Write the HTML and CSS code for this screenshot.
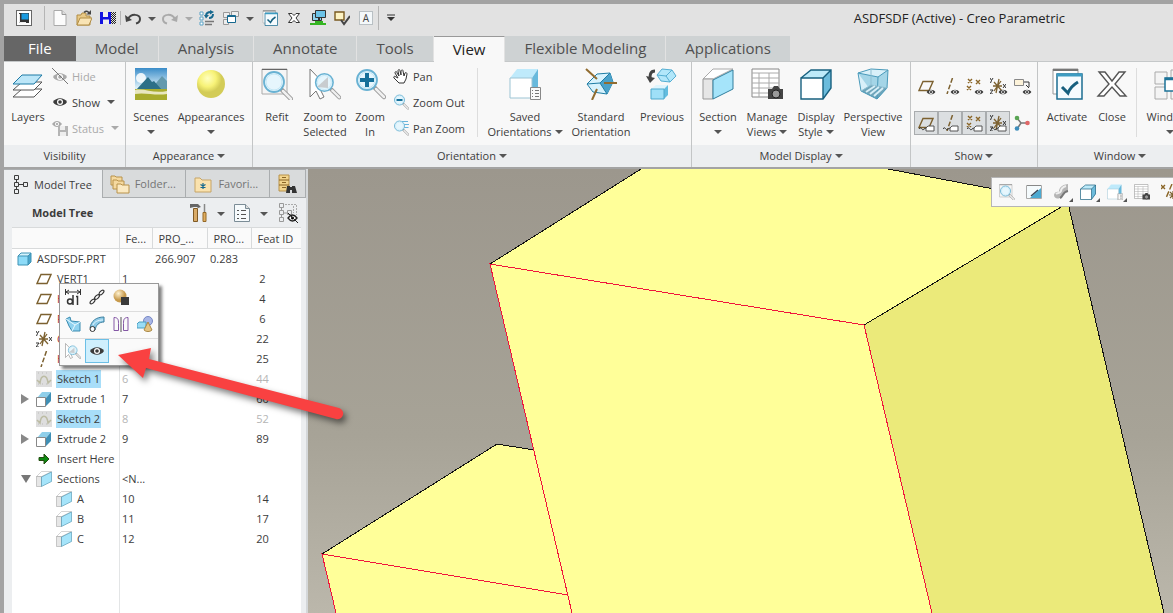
FILE: index.html
```html
<!DOCTYPE html>
<html lang="en">
<head>
  <meta charset="UTF-8">
  <meta name="viewport" content="width=device-width, initial-scale=1.0">
  <title>ASDFSDF (Active) - Creo Parametric</title>
  <link rel="stylesheet" href="styles.css">
</head>
<body>

  <!-- icon set -->
  <svg class="sprite" aria-hidden="true">
    <symbol id="i-app" viewBox="0 0 16 16"><rect x=".5" y=".5" width="15" height="15" fill="#fff" stroke="#666"/><rect x="3" y="3" width="10" height="10" fill="#333"/><rect x="5.500" y="3.500" width="7" height="6" fill="#1a9be0"/><path d="M3.500 4v8.500H10" fill="none" stroke="#eee"/></symbol>
    <symbol id="i-new" viewBox="0 0 16 16"><path d="M2 .5h8l4 4v11H2z" fill="#fcfcfc" stroke="#aaa"/><path d="M10 .5v4h4" fill="#ddd" stroke="#999"/></symbol>
    <symbol id="i-open" viewBox="0 0 16 16"><path d="M1 15V5h4l1-2h4v3h4v9z" fill="#e8c987" stroke="#b18d45"/><path d="M1 15l3-7h12l-3 7z" fill="#f9e4b4" stroke="#b18d45"/><path d="M8 2.500c2-2 4-1.500 5 .5" fill="none" stroke="#444" stroke-width="1.500"/><path d="M15 0v4.500h-4.500z" fill="#444"/></symbol>
    <symbol id="i-save" viewBox="0 0 16 16"><path d="M0 2h11v12H0z" fill="#1111e0"/><path d="M3 2h5v5H3zM3 9.500h6V14H3z" fill="#eee"/><path d="M11.500 2v12M13.500 2v12M15.500 2v12" stroke="#222" stroke-dasharray="1 1"/><path d="M12.500 3v11M14.500 3v11" stroke="#222" stroke-dasharray="1 1"/></symbol>
    <symbol id="i-undo" viewBox="0 0 16 16"><path d="M3 9c3-6 12-5 12 0 0 3-2 4-4 4.500" fill="none" stroke="currentColor" stroke-width="2"/><path d="M0 5l1 7 6-2z" fill="currentColor"/></symbol>
    <symbol id="i-redo" viewBox="0 0 16 16"><path d="M13 9C10 3 1 4 1 9c0 3 2 4 4 4.500" fill="none" stroke="currentColor" stroke-width="2"/><path d="M16 5l-1 7-6-2z" fill="currentColor"/></symbol>
    <symbol id="i-regen" viewBox="0 0 16 16"><path d="M1 2h3v3H1zM1 7h3v3H1zM1 12h3v3H1z" fill="#fff" stroke="#5aa3c6"/><path d="M6 11.500h9M6 14.500h7" stroke="#777" stroke-width="1.500"/><path d="M7 6c0-3 2-4 5-4M14 4c0 3-2 4-4 4" fill="none" stroke="#17698f" stroke-width="2"/><path d="M11 0l4 2-4 2.500zM5 5h5L7 8.500z" fill="#17698f"/></symbol>
    <symbol id="i-windows" viewBox="0 0 16 16"><path d="M.5 2.500h6v5h-6zM8.500 1.500h7v5h-7zM.5 9.500h5v5h-5z" fill="#eee" stroke="#999"/><path d="M4.500 5.500h8v7h-8z" fill="#fff" stroke="#17698f"/><path d="M5 6h7" stroke="#17698f" stroke-width="2"/></symbol>
    <symbol id="i-winlarge" viewBox="0 0 32 32"><path d="M1 4h12v12H1zM17 2h13v12H17zM1 19h12v12H1zM17 19h13v12H17z" fill="#f4f4f4" stroke="#aaa"/><path d="M11 10h15v13H11z" fill="#fff" stroke="#1d7398" stroke-width="1.500"/><path d="M11 11h15" stroke="#1d7398" stroke-width="2.500"/></symbol>
    <symbol id="i-activate" viewBox="0 0 32 32"><path d="M2 1h25v25H2z" fill="#fff" stroke="#999"/><path d="M2 2h25" stroke="#777" stroke-width="2"/><path d="M6 6h25v25H6z" fill="#f5fbfe" stroke="#1d6d91" stroke-width="1.500"/><path d="M6 7h25" stroke="#3d9cc2" stroke-width="3"/><path d="M11 19l6 6c2-5 5-8 10-11" fill="none" stroke="#17607f" stroke-width="3"/></symbol>
    <symbol id="i-close" viewBox="0 0 32 32"><path d="M3 4h6l7 9 7-9h6L19 16l11 12h-6l-8-9-8 9H2l11-12z" fill="#fff" stroke="#555" stroke-width="1.400"/></symbol>
    <symbol id="i-x" viewBox="0 0 12 12"><path d="M.5 1.500h3.500l2 2 2-2h3.500L8 6l3.500 4.500H8l-2-2-2 2H.5L4 6z" fill="#fff" stroke="#333"/></symbol>
    <symbol id="i-monitor" viewBox="0 0 16 16"><path d="M2.500 3.500h9v7h-9z" fill="#8fd2ee" stroke="#333"/><path d="M5.500.5h10v7h-10z" fill="#6cc3e8" stroke="#333"/><path d="M9 8v4" stroke="#333" stroke-width="2"/><path d="M0 14h16M5 12h8" stroke="#35b522" stroke-width="2"/></symbol>
    <symbol id="i-note" viewBox="0 0 16 16"><path d="M1 2h9v8H1z" fill="#fdf3c4" stroke="#7a5a20" stroke-width="1.400"/><path d="M7 10l3 4 6-8" fill="none" stroke="#444" stroke-width="2"/></symbol>
    <symbol id="i-custom" viewBox="0 0 12 12"><path d="M2 3h8" stroke="#333"/><path d="M2 5h8L6 9z" fill="#333"/></symbol>
    <symbol id="i-eye" viewBox="0 0 16 16"><path d="M1 8c3-5 11-5 14 0-3 5-11 5-14 0z" fill="currentColor"/><circle cx="8" cy="8" r="3" fill="#fff"/><circle cx="8" cy="8" r="1.800" fill="currentColor"/></symbol>
    <symbol id="i-hide" viewBox="0 0 16 16"><path d="M1 9c3-5 11-5 14 0-3 5-11 5-14 0z" fill="currentColor"/><circle cx="8" cy="9" r="3" fill="#fff"/><circle cx="8" cy="9" r="1.800" fill="currentColor"/><path d="M0 0l16 16" stroke="#777"/></symbol>
    <symbol id="i-status" viewBox="0 0 16 16"><path d="M0 4c3-4 7-4 10 0-3 4-7 4-10 0z" fill="#aaa"/><circle cx="5" cy="4" r="2" fill="#fff"/><circle cx="5" cy="4" r="1" fill="#999"/><path d="M6 6h10v10H6z" fill="#b5b5b5"/><path d="M8 6h5v4H8zM8 12h6v4H8z" fill="#eee"/></symbol>
    <symbol id="i-layers" viewBox="0 0 32 32"><g stroke="#555" fill="#fff"><path d="M1 29l9-8h20l-8 8z"/><path d="M1 22l9-8h20l-8 8z"/></g><path d="M1 16L10 7h20l-8 9z" fill="#bce6f8" stroke="#1d7aa5"/></symbol>
    <linearGradient id="sky" x2="0" y2="1"><stop stop-color="#3a8cc8"/><stop offset=".6" stop-color="#d9eef8"/></linearGradient>
    <symbol id="i-scenes" viewBox="0 0 32 32"><path d="M0 0h32v32H0z" fill="url(#sky)"/><circle cx="6" cy="10" r="5" fill="#fff" opacity=".85"/><path d="M16 21l11-13 5 5v10H16z" fill="#6399ad"/><path d="M1 22L13 9l4 5 2-1 8 9z" fill="#2d6f87"/><path d="M0 21h32v11H0z" fill="#a8ac2e"/><path d="M0 22c10-2 18 4 32 1v3c-12 2-22-2-32 0z" fill="#e8e7c0"/></symbol>
    <radialGradient id="ball" cx=".38" cy=".3"><stop stop-color="#ffffc0"/><stop offset=".6" stop-color="#f7f277"/><stop offset="1" stop-color="#d3cc57"/></radialGradient>
    <symbol id="i-sphere" viewBox="0 0 32 32"><circle cx="16" cy="16" r="14" fill="url(#ball)"/></symbol>
    <symbol id="i-lens" viewBox="0 0 32 32"><path d="M21 20l9 9" stroke="#999" stroke-width="4.500" stroke-linecap="round"/><path d="M22 21l8 8" stroke="#f0f0f0" stroke-width="2.500" stroke-linecap="round"/><circle cx="13" cy="12" r="10" fill="#e6f6fd" stroke="#69b2d3" stroke-width="1.800"/><circle cx="13" cy="12" r="8" fill="none" stroke="#c3e7f6"/></symbol>
    <symbol id="i-refit" viewBox="0 0 32 32"><path d="M1 1h25v25H1z" fill="#f5f5f5" stroke="#aaa"/><path d="M1 1.500h25" stroke="#666"/><use href="#i-lens" y="2" width="32" height="32"/></symbol>
    <symbol id="i-zoomsel" viewBox="0 0 32 32"><path d="M1 1v28l6-6 4 8 4-2-4-8h9z" fill="#fff" stroke="#777"/><use href="#i-lens" x="4" y="4" width="28" height="28"/><path d="M8 19L19 9v11z" fill="#bbb" opacity=".7"/></symbol>
    <symbol id="i-zoomin" viewBox="0 0 32 32"><use href="#i-lens" width="32" height="32"/><path d="M13 5v14M6 12h14" stroke="#15709a" stroke-width="4"/></symbol>
    <symbol id="i-zoomout" viewBox="0 0 32 32"><use href="#i-lens" width="32" height="32"/><path d="M7 12h12" stroke="#15709a" stroke-width="4"/></symbol>
    <symbol id="i-panzoom" viewBox="0 0 32 32"><path d="M18 3h12M20 9h12M20 15h11" stroke="#68b5dc" stroke-width="2"/><use href="#i-lens" width="32" height="32"/></symbol>
    <symbol id="i-pan" viewBox="0 0 16 16"><path d="M6 15L1 10c-1-2 1-2 2-1l2 1-3-5c0-2 2-2 2 0l2 3-1-5c0-2 2-2 2 0l1 4 0-4c1-2 2-1 2 0l1 5 1-3c1-1 2 0 2 1l-1 5-2 4z" fill="#fff" stroke="#333"/></symbol>
    <symbol id="i-saved" viewBox="0 0 32 32"><path d="M1 10L8 1h21l-6 9z" fill="#bfeafb"/><path d="M23 10l6-9v20l-6 8z" fill="#68b9dc"/><path d="M1 10h22v20H1z" fill="#fff" stroke="#9cc4d4"/><path d="M21.500 19.500h10v12h-10z" fill="#fafafa" stroke="#888"/><path d="M23 22.500h1m2 0h4M23 25.500h1m2 0h4M23 28.500h1m2 0h4" stroke="#777"/></symbol>
    <symbol id="i-standard" viewBox="0 0 32 32"><path d="M2 16l10-10 13-1 3 9-6 12-14-2z" fill="#d7f2fd" stroke="#1f7da5"/><path d="M15 15l10-10 3 9-6 12z" fill="#4aa2ca"/><path d="M2 16l13-1 7 11M15 15l10-10" fill="none" stroke="#1f7da5"/><path d="M1 1l11 10M19 15h13M12 21L7 32" stroke="#916c30" stroke-width="2"/></symbol>
    <symbol id="i-previous" viewBox="0 0 32 32"><path d="M11 7L16 1l10 1 4 6-6 6-9-1z" fill="#b2e7fa" stroke="#55aed2"/><path d="M11 7l9 1 6-6M20 8l4 6" fill="none" stroke="#55aed2"/><path d="M5 21l5-4h12l-4 4z" fill="#dff5fd"/><path d="M18 21l4-4v10l-4 4z" fill="#64bddf"/><path d="M5 21h13v10H5z" fill="#9fe0f8" stroke="#4fa9cd"/><path d="M9 3C4 3 4 7 4 11" fill="none" stroke="#444" stroke-width="3"/><path d="M0 8l4 7 5-5z" fill="#444"/></symbol>
    <symbol id="i-section" viewBox="0 0 32 32"><path d="M1 11L11 1h20L11 11z" fill="#fff" stroke="#aaa"/><path d="M1 11h10v20H1z" fill="#e6e6e6" stroke="#999"/><path d="M11 12L31 2v19L11 31z" fill="#a5e4fa" stroke="#317f9e"/></symbol>
    <symbol id="i-sheet" viewBox="0 0 32 32"><path d="M1 1h27v28H1z" fill="#fff" stroke="#888"/><path d="M1 5h27M1 10h27M1 15h27M1 20h27M1 25h27M8 5v24M18 5v24" stroke="#aaa"/><path d="M17 21h4l2-3h4l2 3h3v10H17z" fill="#444"/><circle cx="25" cy="26" r="4" fill="#999" stroke="#222"/></symbol>
    <symbol id="i-cube" viewBox="0 0 32 32"><path d="M1 10L11 2h20l-8 8z" fill="#bdeaf9"/><path d="M23 10l8-8v18l-8 11z" fill="#6cbcdc"/><path d="M1 10h22v21H1z" fill="#fff"/><path d="M1 10L11 2h20v18l-8 11H1V10h22l8-8M23 10v21" fill="none" stroke="#17607f" stroke-width="1.400"/></symbol>
    <symbol id="i-persp" viewBox="0 0 32 32"><path d="M1 5l13-4 17 1-1 18-10 11L4 23z" fill="#d9f0f9"/><path d="M1 5l20 4 10-7-1 18-10 11z" fill="#8dc9e0" opacity=".7"/><path d="M4 23l10-6 16 3-10 11z" fill="#6fa5ba"/><path d="M1 5l13-4 17 1-1 18-10 11L4 23zM1 5l20 4 10-7M21 9l-1 22" fill="none" stroke="#4a9aba"/><path d="M14 1v16L4 23M14 17l16 3" fill="none" stroke="#8fbfd2"/><path d="M9 24l9-6M13 26l9-7M17 28l9-8" stroke="#d6eef7" stroke-width="2"/></symbol>

    <symbol id="i-plane" viewBox="0 0 16 16"><path d="M5 3.500h10l-4 9H1z" fill="none" stroke="#7c6130" stroke-width="1.400"/></symbol>
    <symbol id="i-axis" viewBox="0 0 16 16"><path d="M10.500 0L5 16" stroke="#7c6130" stroke-width="1.500" stroke-dasharray="5 2"/></symbol>
    <symbol id="i-points" viewBox="0 0 16 16"><path d="M2 1l4 4m0-4L2 5M10 2l4 4m0-4l-4 4M1 8l4 4m0-4l-4 4" stroke="#8a6526" stroke-width="1.400"/></symbol>
    <symbol id="i-csys" viewBox="0 0 16 16"><path d="M9 1L6 15M4 4l8 9M3 8h9M11 3L4 13" stroke="#7c6130" stroke-width="1.300"/><path d="M0 0l1.500 2.500L3 0M1.500 2.500L.5 5M13 6l3 4m0-4l-3 4M0 12h3l-3 4h3" fill="none" stroke="#333"/></symbol>
    <symbol id="i-datum" viewBox="0 0 16 16"><path d="M0 1l4 4m0-4L0 5M11 0L5 14" stroke="#8a6526" stroke-width="1.400" stroke-dasharray="6 2"/><path d="M12 7v8M8 11h8M9 8l6 6M15 8l-6 6" stroke="#7c6130" stroke-width="1.200"/></symbol>
    <symbol id="i-flag" viewBox="0 0 16 16"><path d="M0.500 1.500h9v6h-9z" fill="#fdf3da" stroke="#888"/><path d="M10 4h5v5M12 7l3 3" fill="none" stroke="#333"/></symbol>
    <symbol id="i-tag" viewBox="0 0 16 10"><path d="M0 6c2-4 3 3 5 0l2-1" fill="none" stroke="#333"/><path d="M7 5l2-2h6v5H7z" fill="#fff" stroke="#555"/></symbol>
    <symbol id="i-spin" viewBox="0 0 16 16"><path d="M3 3l4 5h6M7 8l-4 6" fill="none" stroke="#777" stroke-width="1.500"/><circle cx="3" cy="3" r="2.300" fill="#5aa554"/><circle cx="13.500" cy="8" r="2.300" fill="#e06868"/><circle cx="3" cy="13.500" r="2.300" fill="#3d8dbb"/></symbol>

    <symbol id="i-tree" viewBox="0 0 16 20"><path d="M1.500 1.500h4v4h-4zM1.500 8.500h4v4h-4zM1.500 15.500h4v4h-4zM10.500 8.500h4v4h-4zM3.500 5.500v3m0 4v3m2-5h5" fill="none" stroke="currentColor"/></symbol>
    <symbol id="i-folder" viewBox="0 0 20 20"><g fill="#f5d99f" stroke="#b8924b"><path d="M1 2h4l1 1h6v8H1z"/><path d="M3 6h4l1 1h6v8H3z"/><path d="M7 10h4l1 1h7v8H7z" fill="#fbe9c1"/></g></symbol>
    <symbol id="i-fav" viewBox="0 0 20 20"><path d="M2 4h5l2 2h9v12H2z" fill="#fae2ae" stroke="#c6a467"/><path d="M10 9v6M7.500 10.500l5 3m0-3l-5 3" stroke="#17698f" stroke-width="1.200"/></symbol>
    <symbol id="i-find" viewBox="0 0 20 20"><path d="M2 1h10v16H2z" fill="#f2d48c" stroke="#b8924b"/><path d="M2 6h10M2 11h10M5 3.500h4M5 8.500h4M5 13.500h4" stroke="#8a6526"/><path d="M9 19l1-7h3v7zM15 19v-7h3l2 7zM12 13h4v3h-4z" fill="#333"/></symbol>
    <symbol id="i-tools" viewBox="0 0 20 20"><path d="M1 1h8l3 3-3 1-1-1H5L1 5z" fill="#666"/><path d="M4.500 5.500h4v13h-4z" fill="#d9ab68" stroke="#805a25"/><path d="M15.500 1v8" stroke="#888" stroke-width="1.500"/><path d="M14 9.500h3v9h-3z" fill="#e0ad60" stroke="#946827"/></symbol>
    <symbol id="i-list" viewBox="0 0 20 20"><path d="M2.500 1.500h11l4 4v13h-15z" fill="#f6fafc" stroke="#7b8c96"/><path d="M5 7.500h2m2 0h5M5 11.500h2m2 0h5M5 15.500h2m2 0h5" stroke="#555"/><path d="M13.500 1.500v4h4" fill="#ddd" stroke="#7b8c96"/></symbol>
    <symbol id="i-treefilter" viewBox="0 0 20 20"><path d="M1.500.5h4v4h-4zM1.500 7.500h4v4h-4zM1.500 14.500h4v4h-4zM3.500 4v4m0 4v3m2-5h4M9.500 7.500h4v4h-4z" fill="none" stroke="#999"/><path d="M7 1.500h11.500V12M15.500 3v7" fill="none" stroke="#aaa" stroke-dasharray="2 1"/><path d="M10 15c3-4 6-4 9 0-3 4-6 4-9 0z" fill="#fff" stroke="#222" stroke-width="1.300"/><circle cx="14.500" cy="15" r="1.500"/><path d="M10 10l10 10" stroke="#222"/></symbol>
    <symbol id="i-part" viewBox="0 0 16 16"><path d="M2 5l3-3h10l-2 3z" fill="#d5f3fd"/><path d="M12 5l3-3v9l-3 3z" fill="#4ba6cd"/><path d="M2 5h10v9H2z" fill="#8ddbf8"/><path d="M2 5l3-3h10v9l-3 3H2V5h10l3-3M12 5v9" fill="none" stroke="#3f93b5"/></symbol>
    <symbol id="i-sketch" viewBox="0 0 16 16"><path d="M0 0h16v16H0z" fill="#dedede"/><path d="M1 9l3 3C5 3 11 3 12 12l3-3" fill="none" stroke="#bcbca4" stroke-width="1.500"/><path d="M2 2h12M2 13h12" stroke="#bbb" stroke-dasharray="1 3"/></symbol>
    <symbol id="i-extrude" viewBox="0 0 16 16"><path d="M1 7l5-6h9l-5 6z" fill="#8fcfea"/><path d="M10 7l5-6v9l-5 5z" fill="#3f8fb5"/><path d="M.5 6.500h9v9h-9z" fill="#fff" stroke="#888"/></symbol>
    <symbol id="i-insert" viewBox="0 0 16 16"><path d="M3 6.500h5V3l5 5-5 5V9.500H3z" fill="#0c8a12" stroke="#244d10"/></symbol>

    <symbol id="i-dim" viewBox="0 0 16 16"><path d="M.5 0v6M15.500 0v6M1 3h14M4 1L1 3l3 2M12 1l3 2-3 2" fill="none" stroke="#333"/><path d="M8 6v10M11 7.500h1.500V16" fill="none" stroke="#333" stroke-width="1.500"/><circle cx="5" cy="12.500" r="2.500" fill="none" stroke="#333" stroke-width="1.500"/></symbol>
    <symbol id="i-chain" viewBox="0 0 16 16"><g fill="none" stroke="#333" stroke-width="1.200"><ellipse cx="3.500" cy="12.500" rx="3" ry="1.500" transform="rotate(-45 3.500 12.500)"/><ellipse cx="8" cy="8" rx="3" ry="1.500" transform="rotate(-45 8 8)"/><ellipse cx="12.500" cy="3.500" rx="3" ry="1.500" transform="rotate(-45 12.500 3.500)"/></g></symbol>
    <radialGradient id="gold" cx=".38" cy=".3"><stop stop-color="#fff2d0"/><stop offset="1" stop-color="#c79a4c"/></radialGradient>
    <symbol id="i-ballsq" viewBox="0 0 16 16"><circle cx="7" cy="7" r="6.500" fill="url(#gold)"/><path d="M8 8h8v8H8z" fill="#3a3a3a"/></symbol>
    <symbol id="i-pattern" viewBox="0 0 16 16"><path d="M1 3l4-2 1 4 9 1v9H7L4 10z" fill="#8fd2ef" stroke="#3b8bb0"/><path d="M7 15l3-6 5-3M10 9L1 3" fill="none" stroke="#e8f8ff"/></symbol>
    <symbol id="i-sweep" viewBox="0 0 16 16"><path d="M1 12C2 5 7 1 15 1v5c-5 0-8 3-9 8z" fill="#8fcbe8" stroke="#3b7f9f"/><circle cx="3.500" cy="13" r="2.500" fill="#fff" stroke="#333"/><path d="M4 9c1-3 5-5 10-5" fill="none" stroke="#e8f8ff"/></symbol>
    <symbol id="i-mirror" viewBox="0 0 16 16"><path d="M1 1.500c4 0 4.500 2 4.500 6v7H1zM15 1.500c-4 0-4.500 2-4.500 6v7H15z" fill="none" stroke="#8558a6"/><path d="M8 1v15" stroke="#555"/></symbol>
    <symbol id="i-shapes" viewBox="0 0 16 16"><circle cx="11" cy="5" r="4.500" fill="#a8b6e6" stroke="#7788c4"/><path d="M0 8l2-2h7v6H0z" fill="#9adcf5" stroke="#4a9fc2"/><path d="M11 6l4 8c-2 2-6 2-8 0z" fill="#e5c483" stroke="#a98846"/></symbol>
    <symbol id="i-shade" viewBox="0 0 16 16"><path d="M1 11c0-3 4-4 5-3 0-4 2-7 9-8v7c-4 0-4 3-6 5-3 4-8 3-8-1z" fill="#b5b5b5"/><path d="M3 10c2-2 4 0 5-3 0-2 2-4 5-5" fill="none" stroke="#eee" stroke-width="2"/><path d="M7 14c4-2 2-6 8-7" fill="none" stroke="#777" stroke-width="2"/></symbol>
    <symbol id="i-repaint" viewBox="0 0 16 16"><path d="M.5 1.500h15v13H.5z" fill="#f5fbfd" stroke="#aaa"/><path d="M4 14L15 4v10z" fill="#4baad2"/><path d="M1 1.500h14" stroke="#888"/><path d="M5 12l7-6" stroke="#345" stroke-width="1.400"/></symbol>
  </svg>

  <header class="titlebar">
    <div class="qat">
      <button class="qbtn" aria-label="Window"><svg class="ic16"><use href="#i-app"/></svg></button>
      <span class="qsep wide"></span>
      <button class="qbtn" aria-label="New"><svg class="ic16"><use href="#i-new"/></svg></button>
      <button class="qbtn" aria-label="Open"><svg class="ic16"><use href="#i-open"/></svg></button>
      <button class="qbtn" aria-label="Save"><svg class="ic16"><use href="#i-save"/></svg></button>
      <span class="qsep short"></span>
      <button class="qbtn" aria-label="Undo"><svg class="ic16"><use href="#i-undo"/></svg></button>
      <button class="qdrop" aria-label="Undo list"><i class="caret"></i></button>
      <button class="qbtn off" aria-label="Redo"><svg class="ic16"><use href="#i-redo"/></svg></button>
      <button class="qdrop off" aria-label="Redo list"><i class="caret"></i></button>
      <button class="qbtn" aria-label="Regenerate"><svg class="ic16"><use href="#i-regen"/></svg></button>
      <button class="qbtn" aria-label="Windows"><svg class="ic16"><use href="#i-windows"/></svg></button>
      <button class="qdrop" aria-label="Windows list"><i class="caret"></i></button>
    </div>
    <div class="qat">
      <button class="qbtn" aria-label="Activate"><svg class="ic16"><use href="#i-activate"/></svg></button>
      <button class="qbtn" aria-label="Close window"><svg class="ic12"><use href="#i-x"/></svg></button>
      <button class="qbtn" aria-label="Display"><svg class="ic16"><use href="#i-monitor"/></svg></button>
      <button class="qbtn" aria-label="Note"><svg class="ic16"><use href="#i-note"/></svg></button>
      <button class="qbtn" aria-label="Text"><span class="letter">A</span></button>
      <span class="qsep"></span>
      <button class="qbtn" aria-label="Customize"><svg class="ic12"><use href="#i-custom"/></svg></button>
    </div>
    <h1>ASDFSDF (Active) - Creo Parametric</h1>
  </header>

  <nav class="tabs">
    <button class="tab file">File</button>
    <button class="tab">Model</button>
    <button class="tab">Analysis</button>
    <button class="tab">Annotate</button>
    <button class="tab">Tools</button>
    <button class="tab active">View</button>
    <button class="tab">Flexible Modeling</button>
    <button class="tab">Applications</button>
  </nav>

  <div class="ribbon">
    <section class="group visibility">
      <div class="tools">
        <button class="big w48"><svg class="ic32"><use href="#i-layers"/></svg>Layers</button>
        <div class="stack">
          <button class="small off"><svg class="ic16"><use href="#i-hide"/></svg>Hide</button>
          <button class="small"><svg class="ic16"><use href="#i-eye"/></svg>Show<i class="caret"></i></button>
          <button class="small off"><svg class="ic16"><use href="#i-status"/></svg>Status<i class="caret"></i></button>
        </div>
      </div>
      <div class="name">Visibility</div>
    </section>

    <section class="group appearance">
      <div class="tools">
        <button class="big w42"><svg class="ic32"><use href="#i-scenes"/></svg>Scenes<span><i class="caret lone"></i></span></button>
        <button class="big w78"><svg class="ic32"><use href="#i-sphere"/></svg>Appearances<span><i class="caret lone"></i></span></button>
      </div>
      <div class="name">Appearance<i class="caret"></i></div>
    </section>

    <section class="group orientation">
      <div class="tools">
        <button class="big w48"><svg class="ic32"><use href="#i-refit"/></svg>Refit</button>
        <button class="big w48"><svg class="ic32"><use href="#i-zoomsel"/></svg>Zoom to<span>Selected</span></button>
        <button class="big w42"><svg class="ic32"><use href="#i-zoomin"/></svg>Zoom<span>In</span></button>
        <div class="stack">
          <button class="small"><svg class="ic16"><use href="#i-pan"/></svg>Pan</button>
          <button class="small"><svg class="ic16"><use href="#i-zoomout"/></svg>Zoom Out</button>
          <button class="small"><svg class="ic16"><use href="#i-panzoom"/></svg>Pan Zoom</button>
        </div>
        <div class="divider"></div>
        <button class="big w78"><svg class="ic32"><use href="#i-saved"/></svg>Saved<span>Orientations<i class="caret"></i></span></button>
        <button class="big w74"><svg class="ic32"><use href="#i-standard"/></svg>Standard<span>Orientation</span></button>
        <button class="big w48"><svg class="ic32"><use href="#i-previous"/></svg>Previous</button>
      </div>
      <div class="name">Orientation<i class="caret"></i></div>
    </section>

    <section class="group display">
      <div class="tools">
        <button class="big w42"><svg class="ic32"><use href="#i-section"/></svg>Section<span><i class="caret lone"></i></span></button>
        <button class="big w56"><svg class="ic32"><use href="#i-sheet"/></svg>Manage<span>Views<i class="caret"></i></span></button>
        <button class="big w42"><svg class="ic32"><use href="#i-cube"/></svg>Display<span>Style<i class="caret"></i></span></button>
        <button class="big w72"><svg class="ic32"><use href="#i-persp"/></svg>Perspective<span>View</span></button>
      </div>
      <div class="name">Model Display<i class="caret"></i></div>
    </section>

    <section class="group show">
      <div class="tools">
        <div class="toggles">
          <button aria-label="Plane display"><svg class="ic16"><use href="#i-plane"/></svg><svg class="mini"><use href="#i-eye"/></svg></button>
          <button aria-label="Axis display"><svg class="ic16"><use href="#i-axis"/></svg><svg class="mini"><use href="#i-eye"/></svg></button>
          <button aria-label="Point display"><svg class="ic16"><use href="#i-points"/></svg><svg class="mini"><use href="#i-eye"/></svg></button>
          <button aria-label="Csys display"><svg class="ic16"><use href="#i-csys"/></svg><svg class="mini"><use href="#i-eye"/></svg></button>
          <button aria-label="Annotation display"><svg class="ic16"><use href="#i-flag"/></svg><svg class="mini"><use href="#i-eye"/></svg></button>
          <button class="on" aria-label="Plane tags"><svg class="ic16"><use href="#i-plane"/></svg><svg class="tag"><use href="#i-tag"/></svg></button>
          <button class="on" aria-label="Axis tags"><svg class="ic16"><use href="#i-axis"/></svg><svg class="tag"><use href="#i-tag"/></svg></button>
          <button class="on" aria-label="Point tags"><svg class="ic16"><use href="#i-points"/></svg><svg class="tag"><use href="#i-tag"/></svg></button>
          <button class="on" aria-label="Csys tags"><svg class="ic16"><use href="#i-csys"/></svg><svg class="tag"><use href="#i-tag"/></svg></button>
          <button aria-label="Spin center"><svg class="ic16"><use href="#i-spin"/></svg></button>
        </div>
      </div>
      <div class="name">Show<i class="caret"></i></div>
    </section>

    <section class="group window">
      <div class="tools">
        <button class="big w48"><svg class="ic32"><use href="#i-activate"/></svg>Activate</button>
        <button class="big w42"><svg class="ic32"><use href="#i-close"/></svg>Close</button>
        <div class="divider"></div>
        <button class="big w56"><svg class="ic32"><use href="#i-winlarge"/></svg>Windows<span><i class="caret lone"></i></span></button>
      </div>
      <div class="name">Window<i class="caret"></i></div>
    </section>
  </div>

  <main class="workspace">
    <aside class="sidebar">
      <div class="side-tabs">
        <button class="side-tab active"><svg class="ic16x20"><use href="#i-tree"/></svg>Model Tree</button>
        <button class="side-tab"><svg class="ic20"><use href="#i-folder"/></svg>Folder...</button>
        <button class="side-tab"><svg class="ic20"><use href="#i-fav"/></svg>Favori...</button>
        <button class="side-tab find" aria-label="Find"><svg class="ic20"><use href="#i-find"/></svg></button>
      </div>
      <div class="side-head">
        <h2>Model Tree</h2>
        <button class="sbtn" aria-label="Settings"><svg class="ic20"><use href="#i-tools"/></svg></button>
        <button class="sdrop" aria-label="Settings list"><i class="caret"></i></button>
        <button class="sbtn" aria-label="Show"><svg class="ic20"><use href="#i-list"/></svg></button>
        <button class="sdrop" aria-label="Show list"><i class="caret"></i></button>
        <button class="sbtn filter" aria-label="Filter"><svg class="ic20"><use href="#i-treefilter"/></svg></button>
      </div>
      <div class="tree">
        <table>
          <colgroup><col class="c-name"><col class="c-num"><col class="c-p1"><col class="c-p2"><col class="c-id"></colgroup>
          <thead>
            <tr><th></th><th>Fe...</th><th>PRO_...</th><th>PRO...</th><th>Feat ID</th></tr>
          </thead>
          <tbody>
            <tr><td><div class="node root"><svg class="ic16"><use href="#i-part"/></svg><span>ASDFSDF.PRT</span></div></td><td></td><td>266.907</td><td>0.283</td><td></td></tr>
            <tr><td><div class="node"><b class="exp"></b><svg class="ic16"><use href="#i-plane"/></svg><span>VERT1</span></div></td><td>1</td><td></td><td></td><td>2</td></tr>
            <tr><td><div class="node red"><b class="exp"></b><svg class="ic16"><use href="#i-plane"/></svg><span>HORIZ1</span></div></td><td></td><td></td><td></td><td>4</td></tr>
            <tr><td><div class="node red"><b class="exp"></b><svg class="ic16"><use href="#i-plane"/></svg><span>FRONT1</span></div></td><td></td><td></td><td></td><td>6</td></tr>
            <tr><td><div class="node red"><b class="exp"></b><svg class="ic16"><use href="#i-csys"/></svg><span>CSYS1</span></div></td><td></td><td></td><td></td><td>22</td></tr>
            <tr><td><div class="node red"><b class="exp"></b><svg class="ic16"><use href="#i-axis"/></svg><span>HAXIS</span></div></td><td></td><td></td><td></td><td>25</td></tr>
            <tr class="dim"><td><div class="node sel"><b class="exp"></b><svg class="ic16"><use href="#i-sketch"/></svg><span>Sketch 1</span></div></td><td>6</td><td></td><td></td><td>44</td></tr>
            <tr><td><div class="node"><b class="exp closed"></b><svg class="ic16"><use href="#i-extrude"/></svg><span>Extrude 1</span></div></td><td>7</td><td></td><td></td><td>60</td></tr>
            <tr class="dim"><td><div class="node sel"><b class="exp"></b><svg class="ic16"><use href="#i-sketch"/></svg><span>Sketch 2</span></div></td><td>8</td><td></td><td></td><td>52</td></tr>
            <tr><td><div class="node"><b class="exp closed"></b><svg class="ic16"><use href="#i-extrude"/></svg><span>Extrude 2</span></div></td><td>9</td><td></td><td></td><td>89</td></tr>
            <tr><td><div class="node"><b class="exp"></b><svg class="ic16"><use href="#i-insert"/></svg><span>Insert Here</span></div></td><td></td><td></td><td></td><td></td></tr>
            <tr><td><div class="node"><b class="exp opened"></b><svg class="ic16"><use href="#i-section"/></svg><span>Sections</span></div></td><td>&lt;N...</td><td></td><td></td><td></td></tr>
            <tr><td><div class="node child"><svg class="ic16"><use href="#i-section"/></svg><span>A</span></div></td><td>10</td><td></td><td></td><td>14</td></tr>
            <tr><td><div class="node child"><svg class="ic16"><use href="#i-section"/></svg><span>B</span></div></td><td>11</td><td></td><td></td><td>17</td></tr>
            <tr><td><div class="node child"><svg class="ic16"><use href="#i-section"/></svg><span>C</span></div></td><td>12</td><td></td><td></td><td>20</td></tr>
          </tbody>
        </table>
        <div class="popup">
          <div class="prow">
            <button aria-label="Edit dimensions"><svg class="ic16"><use href="#i-dim"/></svg></button>
            <button aria-label="References"><svg class="ic16"><use href="#i-chain"/></svg></button>
            <button aria-label="Suppress"><svg class="ic16"><use href="#i-ballsq"/></svg></button>
          </div>
          <div class="prow">
            <button aria-label="Extrude"><svg class="ic16"><use href="#i-pattern"/></svg></button>
            <button aria-label="Sweep"><svg class="ic16"><use href="#i-sweep"/></svg></button>
            <button aria-label="Mirror"><svg class="ic16"><use href="#i-mirror"/></svg></button>
            <button aria-label="Shapes"><svg class="ic16"><use href="#i-shapes"/></svg></button>
          </div>
          <div class="prow">
            <button aria-label="Zoom to selected"><svg class="ic16"><use href="#i-zoomsel"/></svg></button>
            <button class="hot" aria-label="Show"><svg class="ic16"><use href="#i-eye"/></svg></button>
          </div>
        </div>
      </div>
    </aside>

    <div class="viewport">
      <svg class="scene" viewBox="308 169 865 444" preserveAspectRatio="xMinYMin slice">
        <g fill="#ffff99">
          <path d="M322 554L497 444L534 450L573 613H336z"/>
          <path d="M490 264L641 169H888L1068 203L864 325z"/>
          <path d="M490 264L864 325L932 613H572z"/>
        </g>
        <path d="M864 325L1068 203L1164 613H932z" fill="#ebea7a"/>
        <g fill="none" stroke="#111" shape-rendering="crispEdges">
          <path d="M322 554L497 444L534 450"/>
          <path d="M490 264L641 169M888 169L1068 203L864 325M1068 203L1164 613"/>
        </g>
        <g fill="none" stroke="#f0143c" shape-rendering="crispEdges">
          <path d="M572 613L490 264L864 325L932 613"/>
          <path d="M336 613L322 554L568 595"/>
        </g>
      </svg>
      <div class="floatbar">
        <button aria-label="Refit"><svg class="ic16"><use href="#i-refit"/></svg></button>
        <button aria-label="Repaint"><svg class="ic16"><use href="#i-repaint"/></svg></button>
        <button class="more" aria-label="Shading"><svg class="ic16"><use href="#i-shade"/></svg></button>
        <button class="more" aria-label="Display style"><svg class="ic16"><use href="#i-cube"/></svg></button>
        <button class="more" aria-label="Saved orientations"><svg class="ic16"><use href="#i-saved"/></svg></button>
        <button aria-label="View manager"><svg class="ic16"><use href="#i-sheet"/></svg></button>
        <button aria-label="Datum display"><svg class="ic16"><use href="#i-datum"/></svg></button>
      </div>
    </div>

    <svg class="pointer" viewBox="0 0 240 80">
      <path d="M4 8L37 1L35 12L225 61a5.500 5.500 0 0 1-3 11L32 21L29 31z" fill="#f94141"/>
    </svg>
  </main>

</body>
</html>
```
FILE: styles.css
```css
* {
  box-sizing: border-box;
}

body {
  margin: 0;
  height: 100vh;
  display: flex;
  flex-direction: column;
  overflow: hidden;
  border: solid #a3a3a3;
  border-width: 4px 0 0 4px;
  background: #e2e2e2;
  font-family: "Open Sans", "Noto Sans", sans-serif;
  font-size: 11px;
  color: #3c3c3c;
}

button {
  border: none;
  background: none;
  padding: 0;
  font: inherit;
  color: inherit;
}

svg {
  display: block;
  flex: none;
}

.sprite {
  position: absolute;
  width: 0;
  height: 0;
}

.ic12 { width: 12px; height: 12px; }
.ic16 { width: 16px; height: 16px; }
.ic16x20 { width: 16px; height: 20px; }
.ic20 { width: 20px; height: 20px; }
.ic32 { width: 32px; height: 32px; }

.caret {
  display: inline-block;
  border: 4px solid transparent;
  border-top-color: #555;
  border-bottom: none;
}

.off { color: #aaa; }
.off .caret { border-top-color: #aaa; }

/* title bar */
.titlebar {
  display: flex;
  align-items: center;
  height: 28px;
  margin-bottom: 4px;
  padding-left: 8px;
  flex: none;
}

.titlebar h1 {
  margin: 0 108px 0 auto;
  font-size: 13px;
  line-height: 16px;
  font-weight: normal;
  color: #222;
}

.qat {
  display: flex;
  align-items: center;
}

.qat + .qat {
  margin-left: 2px;
}

.qbtn {
  width: 24px;
  height: 24px;
  display: flex;
  align-items: center;
  justify-content: center;
  color: #444;
}

.qbtn.off { color: #aaa; }

.qdrop {
  width: 13px;
  height: 24px;
  line-height: 14px;
}

.qdrop .caret,
.sdrop .caret {
  vertical-align: middle;
}

.qsep {
  width: 1px;
  height: 24px;
  background: #b5b5b5;
}

.qsep.wide {
  margin: 0 3px 0 8px;
}

.qsep.short {
  height: 14px;
}

.letter {
  width: 14px;
  height: 14px;
  line-height: 12px;
  border: 1px solid #b9c0c4;
  background: #f4f8fa;
  font-size: 10px;
}

/* ribbon tabs */
.tabs {
  display: flex;
  height: 26px;
  flex: none;
  border-bottom: 1px solid #c5c8c9;
}

.tab {
  padding: 0 19px 2px;
  background: #ced2d3;
  border-right: 1px solid #e2e2e2;
  font-size: 15px;
  line-height: 22px;
  color: #505050;
}

.tab.file {
  padding: 0 24px 2px;
  border-right: none;
  background: #666;
  color: #fff;
}

.tab.active {
  margin-bottom: -1px;
  border-top: 1px solid #999;
  background: #f8f8f8;
  color: #222;
}

/* ribbon */
.ribbon {
  display: flex;
  flex: none;
  height: 107px;
  background: #f8f8f8;
  border-bottom: 2px solid #a3a3a3;
  overflow: hidden;
}

.group {
  flex: none;
  display: flex;
  flex-direction: column;
  border-right: 1px solid #c3c5c6;
}

.visibility { width: 122px; }
.appearance { width: 127px; }
.orientation { width: 439px; }
.display { width: 219px; }
.show { width: 127px; }
.window { width: 165px; }

.tools {
  flex: 1;
  display: flex;
}

.appearance .tools {
  padding-left: 4px;
}

.display .tools,
.window .tools {
  padding-left: 5px;
}

.name {
  height: 22px;
  line-height: 22px;
  background: #eceef0;
  text-align: center;
}

.name .caret,
.big .caret {
  margin: 0 0 2px 3px;
}

.big .caret.lone {
  margin-left: 0;
}

.big {
  flex: none;
  display: flex;
  flex-direction: column;
  align-items: center;
  padding-top: 6px;
  line-height: 15px;
  white-space: nowrap;
}

.big svg {
  margin-bottom: 9px;
}

.w42 { width: 42px; }
.w48 { width: 48px; }
.w56 { width: 56px; }
.w72 { width: 72px; }
.w74 { width: 74px; }
.w78 { width: 78px; }

.stack {
  display: flex;
  flex-direction: column;
  padding: 1px 3px 0 0;
}

.small {
  display: flex;
  align-items: center;
  height: 26px;
  gap: 4px;
}

.small .caret {
  margin-left: 3px;
}

.orientation .stack {
  width: 86px;
  padding-left: 2px;
}

.divider {
  width: 1px;
  margin: 6px 8px 8px 0;
  background: #ddd;
}

.window .divider {
  margin: 6px 5px 8px 3px;
}

.toggles {
  display: grid;
  grid-template-columns: repeat(5, 24px);
  grid-auto-rows: 24px;
  row-gap: 13px;
  padding: 12px 0 0 3px;
}

.toggles button {
  position: relative;
  display: flex;
  align-items: center;
  justify-content: center;
}

.toggles .on {
  border: 1px solid #a9acae;
  background: #dcdfe1;
}

.mini,
.tag {
  position: absolute;
  right: 2px;
  bottom: 1px;
  width: 10px;
  height: 10px;
}

.tag {
  width: 16px;
}

/* work area */
.workspace {
  position: relative;
  flex: 1;
  display: flex;
  min-height: 0;
}

.sidebar {
  width: 304px;
  flex: none;
  display: flex;
  flex-direction: column;
  background: #eceef0;
  border-right: 2px solid #d4d7d9;
}

.side-tabs {
  display: flex;
  height: 29px;
}

.side-tab {
  display: flex;
  align-items: center;
  gap: 5px;
  width: 84px;
  padding-left: 7px;
  background: #d9dbdc;
  border: solid #aaadaf;
  border-width: 1px 1px 1px 0;
  color: #757575;
}

.side-tab.active {
  width: 99px;
  padding-left: 9px;
  background: #eceef0;
  border-bottom: none;
  color: #3c3c3c;
}

.side-tab.find {
  width: 36px;
}

.side-head {
  display: flex;
  align-items: center;
  height: 29px;
  padding-left: 28px;
}

.side-head h2 {
  flex: 1;
  margin: 0;
  font-size: 11px;
}

.sbtn {
  width: 20px;
}

.sdrop {
  width: 23px;
  line-height: 14px;
}

.filter {
  margin: 0 8px 0 3px;
}

.tree {
  position: relative;
  flex: 1;
  margin: 0 5px 0 8px;
  background: linear-gradient(#e3e5e6, #e3e5e6) 107px 0 / 1px 100% no-repeat #fff;
}

table {
  width: 100%;
  table-layout: fixed;
  border-collapse: collapse;
}

.c-name { width: 107px; }
.c-num { width: 33px; }
.c-p1 { width: 55px; }
.c-p2 { width: 44px; }

th {
  height: 21px;
  padding: 0 0 0 6px;
  border: solid #d8dadb;
  border-width: 1px 0 1px 1px;
  background: #fafafa;
  text-align: left;
  font-weight: normal;
  white-space: nowrap;
}

th:first-child {
  border-left: none;
}

td {
  height: 20px;
  padding: 0 0 0 3px;
  white-space: nowrap;
}

td:first-child {
  padding: 0;
}

td:last-child {
  padding: 0 27px 0 0;
  text-align: center;
}

.dim td {
  color: #b5b5b5;
}

.node {
  display: flex;
  align-items: center;
  padding-left: 24px;
  color: #3c3c3c;
}

.node span {
  margin-left: 4px;
  padding: 0 1px;
  line-height: 18px;
}

.node.root { padding-left: 4px; }
.node.child { padding-left: 44px; }
.node.red { color: #a03030; }

.sel span {
  background: #a8def9;
}

.exp {
  width: 10px;
  margin: 0 5px 0 -15px;
}

.exp.closed {
  height: 10px;
  border: solid transparent;
  border-width: 5px 0 5px 8px;
  border-left-color: #888;
}

.exp.opened {
  border: solid transparent;
  border-width: 8px 5px 0;
  border-top-color: #777;
}

.popup {
  position: absolute;
  left: 47px;
  top: 56px;
  width: 100px;
  border: 1px solid #999;
  background: #fafafa;
  box-shadow: 3px 3px 3px rgba(0, 0, 0, 0.5);
}

.prow {
  display: flex;
  height: 27px;
  padding: 0 1px 2px;
}

.prow + .prow {
  border-top: 1px solid #ddd;
}

.prow button {
  width: 24px;
  display: flex;
  align-items: center;
  justify-content: center;
}

.prow .hot {
  border: 1px solid #6cbfe6;
  background: #cfeffd;
}

/* model view */
.viewport {
  position: relative;
  flex: 1;
  overflow: hidden;
  background: linear-gradient(#9c978d, #a7a397 60%, #bbb7ab);
}

.scene {
  width: 100%;
  height: 100%;
}

.floatbar {
  position: absolute;
  top: 8px;
  right: 0;
  width: 182px;
  height: 30px;
  display: flex;
  gap: 3px;
  padding-left: 3px;
  overflow: hidden;
  border: 1px solid #b5b5b5;
  border-right: none;
  background: #f8f8f8;
}

.floatbar button {
  flex: 0 0 24px;
  display: flex;
  align-items: center;
  justify-content: center;
  position: relative;
}

.more::after {
  content: "";
  position: absolute;
  right: 0;
  bottom: 4px;
  border: 2px solid #555;
  border-top-color: transparent;
  border-left-color: transparent;
}

.pointer {
  position: absolute;
  left: 110px;
  top: 178px;
  width: 240px;
  height: 80px;
  pointer-events: none;
  filter: drop-shadow(3px 4px 3px rgba(0, 0, 0, 0.5));
}
```
